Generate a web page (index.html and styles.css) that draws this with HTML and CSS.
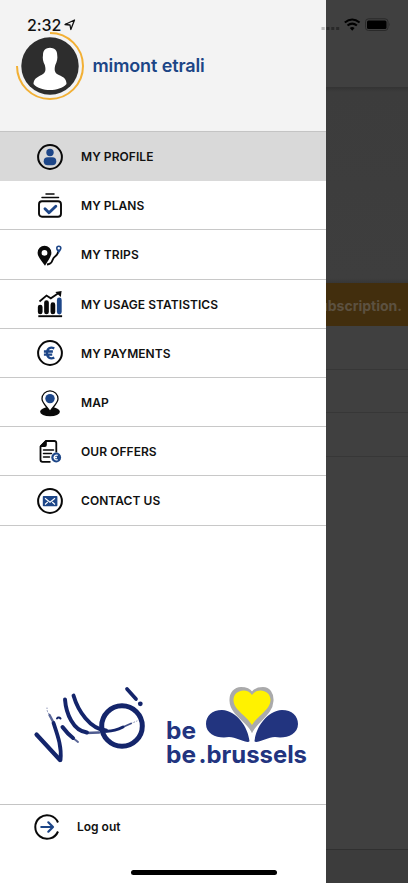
FILE: index.html
```html
<!DOCTYPE html>
<html lang="en">

<head>
    <meta charset="utf-8">
    <meta name="viewport" content="width=device-width, initial-scale=1">
    <title>Villo</title>
    <link rel="stylesheet" href="styles.css">
</head>

<body>
    <div class="screen">
        <!-- Side menu -->
        <nav class="drawer">
            <header class="profile">
                <svg class="avatar" width="70" height="70" viewBox="0 0 70 70">
                    <circle cx="35" cy="35" r="28.7" fill="#2d2d2d" />
                    <path d="M35 2A33 33 0 1 1 2 35" fill="none" stroke="#f2b035" stroke-width="2" />
                    <path d="M35 16.8C39 17 42.4 19 42.2 24C42.8 27 42 31 40.3 34C39.3 38 39.3 41 42 43C47 45.5 51.5 46.8 51.5 53C48 57 41 59 35 59S22 57 18.500 53C18.500 47 24 45.500 28 43C31 41 30.800 38 29.800 34C28 31 27.400 27 28 24C28 19 31 17 35 16.800Z" fill="#fff" />
                </svg>
                <span class="user-name">mimont etrali</span>
            </header>

            <ul class="menu">
                <li class="menu-item active">
                    <svg class="icon" viewBox="0 0 26 26">
                        <circle cx="13" cy="13" r="11.9" fill="none" stroke="#090909" stroke-width="2" />
                        <circle cx="13" cy="8.500" r="3.700" fill="#1d4688" />
                        <rect x="6.700" y="13.300" width="12.600" height="8" rx="4" fill="#1d4688" />
                    </svg>
                    <span>MY PROFILE</span>
                </li>
                <li class="menu-item">
                    <svg class="icon" viewBox="0 0 26 26">
                        <path d="M9 1h8M5 4.500h16.500" stroke="#090909" stroke-width="1.500" stroke-linecap="round" />
                        <rect x="2" y="8.200" width="22" height="15.500" rx="3" fill="none" stroke="#090909" stroke-width="1.900" />
                        <path d="M8 15.700l4 4 6.800-6.500" fill="none" stroke="#1d4688" stroke-width="2.900" stroke-linecap="round" stroke-linejoin="round" />
                    </svg>
                    <span>MY PLANS</span>
                </li>
                <li class="menu-item">
                    <svg class="icon" viewBox="0 0 26 26">
                        <path d="M10 22.500C17 22 14 17 18 14.500C20.500 12.500 21 11.500 21.200 9.500" fill="none" stroke="#090909" stroke-width="1.900" />
                        <path fill-rule="evenodd" d="M7.500 3.800A6.900 6.900 0 0 1 14.400 10.700C14.400 15 10.500 19 8 23.700C5 19 .6 15 .6 10.700A6.900 6.900 0 0 1 7.500 3.800ZM7.500 8A2.900 2.900 0 1 0 7.500 13.800A2.900 2.900 0 0 0 7.500 8Z" fill="#090909" />
                        <path fill-rule="evenodd" d="M21.800 3.500A2.800 2.800 0 0 1 24.600 6.300C24.600 8.200 22.500 9.500 21.700 12C21 9.500 19 8.500 19 6.300A2.800 2.800 0 0 1 21.800 3.500ZM21.800 5.100A1.200 1.200 0 1 0 21.800 7.500A1.200 1.200 0 0 0 21.800 5.100Z" fill="#1d4688" />
                    </svg>
                    <span>MY TRIPS</span>
                </li>
                <li class="menu-item">
                    <svg class="icon" viewBox="0 0 26 26">
                        <path d="M1.300 25.200h23.800" stroke="#090909" stroke-width="1.900" />
                        <path d="M3.200 16v5M9.500 11.500v9.500M15.900 13.700V21" stroke="#090909" stroke-width="4.700" stroke-linecap="round" />
                        <path d="M22.300 9v12" stroke="#1d4688" stroke-width="4.800" stroke-linecap="round" />
                        <path d="M2.500 10.500L9.500 4.500l4.300 2.800 7.500-5" fill="none" stroke="#090909" stroke-width="1.800" />
                        <path d="M18.300 1l6.300-1-.8 6z" fill="#090909" />
                    </svg>
                    <span>MY USAGE STATISTICS</span>
                </li>
                <li class="menu-item">
                    <svg class="icon" viewBox="0 0 26 26">
                        <circle cx="13" cy="13" r="11.900" fill="none" stroke="#090909" stroke-width="2" />
                        <path d="M17.300 8.400C13.300 6.700 10 8.300 10 13S13.300 19.300 17.300 17.600M6.900 11.500h9M6.900 14.700h8.300" fill="none" stroke="#1d4688" stroke-width="2.300" />
                    </svg>
                    <span>MY PAYMENTS</span>
                </li>
                <li class="menu-item">
                    <svg class="icon" viewBox="0 0 26 26">
                        <ellipse cx="13" cy="21.700" rx="9.900" ry="4.600" fill="#090909" />
                        <path d="M13 .8A8 8 0 0 1 21 8.800C21 13 16.200 16.500 13 21.500C9.800 16.500 5 13 5 8.800A8 8 0 0 1 13 .8Z" fill="#fff" stroke="#090909" stroke-width="1.300" />
                        <circle cx="13" cy="8.600" r="4.700" fill="#1d4688" />
                    </svg>
                    <span>MAP</span>
                </li>
                <li class="menu-item">
                    <svg class="icon" viewBox="0 0 26 26">
                        <path d="M19.300 13.500V4Q19.300 2 17.300 2H9L3.500 7.500V20.800Q3.500 22.800 5.500 22.800H13.500" fill="none" stroke="#090909" stroke-width="1.800" />
                        <path d="M3 8V6.800L8.300 1.500H9.800V6Q9.800 8 7.800 8Z" fill="#090909" />
                        <path d="M6.500 11h10M6.500 14.500h8M6.500 18h6" stroke="#090909" stroke-width="1.500" stroke-linecap="round" />
                        <circle cx="19.200" cy="18.500" r="4.900" fill="#1d4688" />
                        <path d="M20.700 16.400Q17.300 15.500 17.300 18.500T20.700 20.600M16.500 18.500h3.500" fill="none" stroke="#fff" stroke-width="1.300" />
                    </svg>
                    <span>OUR OFFERS</span>
                </li>
                <li class="menu-item">
                    <svg class="icon" viewBox="0 0 26 26">
                        <circle cx="13" cy="13" r="11.900" fill="none" stroke="#090909" stroke-width="2" />
                        <rect x="5.800" y="8" width="14.600" height="10.300" rx=".7" fill="#1d4688" />
                        <path d="M8 10.200l5 4 5-4M8 16.500l2.800-2.500M18 16.500l-2.800-2.500" fill="none" stroke="#fff" stroke-width="1.100" />
                    </svg>
                    <span>CONTACT US</span>
                </li>
            </ul>

            <!-- Partner logos -->
            <div class="logos">
                <svg class="villo" width="120" height="90" viewBox="30 680 120 90" fill="none" stroke="#14256b" stroke-linecap="round">
                    <circle cx="122" cy="726" r="20.300" stroke-width="5" />
                    <path d="M36.500 734.500L60 760" stroke-width="4.200" />
                    <path d="M60.500 760C62 747 57.500 735 53.500 723" stroke-width="3.800" />
                    <path d="M54 724C53 721 51 718 49.500 715" stroke-width="2.500" opacity=".7" />
                    <path d="M49 714C47.500 712 47 711 47 708" stroke-width="1" stroke-dasharray="1 2" opacity=".5" />
                    <path d="M62.500 727C65.500 731 69 735 73 738" stroke-width="4" />
                    <path d="M73 738L78 742" stroke-width="2" opacity=".7" />
                    <path d="M57 718.500C58 717 59.500 717.500 60.500 718.500" stroke-width="2" />
                    <path d="M65 699.500C66 713 73 731 87 732.500" stroke-width="3.900" />
                    <path d="M86 733L99 732.500" stroke-width="2.500" opacity=".75" />
                    <path d="M73.500 695.500C78 711 90 729 106 730.500" stroke-width="3.900" />
                    <path d="M104 731C112 732 118 729.500 123 727" stroke-width="3" />
                    <path d="M122 727.500L131 723.500" stroke-width="1.800" opacity=".8" />
                    <path d="M131 723.500L137 721" stroke-width="1" stroke-dasharray="1 2" opacity=".5" />
                    <path d="M127 689L136 699" stroke-width="3.700" />
                    <circle cx="140.300" cy="703.800" r="2.400" fill="#14256b" stroke="none" />
                </svg>
                <svg class="brussels" width="146" height="90" viewBox="163 680 146 90">
                    <path d="M252 731C247 721 231 714 230.500 701C230 693 235 688 241 688C246 688 250 690 252 693C254 690 258 688 263 688C269 688 273 693 272.500 701C272 714 257 721 252 731Z" fill="#aaaaab" stroke="#aaaaab" stroke-width="2" />
                    <path d="M252 725C246 715 233.500 710 233.500 700C233.500 690 247 687 252 695C257 687 270.500 690 270.500 700C270.500 710 258 715 252 725Z" fill="#fff200" />
                    <path d="M247.500 742C241 741 236 737.500 229 737C219 739 206 735 206 724C206 716 212 710 222 710C237 711 248 727 249.500 741Q249.500 742 247.500 742Z" fill="#22347f" />
                    <path d="M256.500 742C263 741 268 737.500 275 737C285 739 298 735 298 724C298 716 292 710 282 710C267 711 256 727 254.500 741Q254.500 742 256.500 742Z" fill="#22347f" />
                    <g class="brussels-text">
                        <text x="166" y="739.300" textLength="30" lengthAdjust="spacingAndGlyphs">be</text>
                        <text x="166" y="762.800" textLength="30" lengthAdjust="spacingAndGlyphs">be</text>
                        <text x="198.500" y="762.800" textLength="108.500" lengthAdjust="spacingAndGlyphs">.brussels</text>
                    </g>
                </svg>
            </div>

            <footer class="logout">
                <svg class="icon" viewBox="0 0 26 26">
                    <path d="M24 8.500A11.800 11.800 0 1 0 24 17.500" fill="none" stroke="#090909" stroke-width="2" />
                    <path d="M7.300 13h11M14.300 8.300l4.700 4.700-4.700 4.700" fill="none" stroke="#1d4688" stroke-width="2.200" stroke-linecap="round" stroke-linejoin="round" />
                </svg>
                <span>Log out</span>
            </footer>
        </nav>

        <!-- Dimmed page behind the menu -->
        <main class="page">
            <div class="page-header"></div>
            <div class="page-map"></div>
            <div class="banner"><span>subscription.</span></div>
            <div class="page-row"></div>
            <div class="page-row"></div>
            <div class="page-row"></div>
            <div class="page-rest"></div>
            <div class="page-footer"></div>
        </main>

        <!-- Phone status bar -->
        <div class="status-bar">
            <span class="time">2:32</span>
            <svg class="location" width="12" height="12" viewBox="0 0 12 12">
                <path d="M1 5.500L10.500 1 6.800 10.500 6 6Z" fill="none" stroke="#111" stroke-width="1.300" stroke-linejoin="round" />
            </svg>
            <svg class="signal" width="70" height="14" viewBox="0 0 70 14">
                <path d="M1.500 9h3.200v3H1.500z" fill="#bbb" />
                <path d="M6.400 9h3v3h-3zM11.300 9h3v3h-3zM16.200 9h3v3h-3z" fill="#292929" />
                <g fill="none" stroke="#000" stroke-width="2.100">
                    <path d="M24.800 4.500Q32.200-1.500 39.600 4.500M27.500 7.500Q32.200 3.600 36.900 7.500" />
                </g>
                <path d="M29.800 10Q32.200 8.100 34.600 10L32.200 12.800Z" />
                <rect x="45.500" y=".8" width="22.500" height="11.700" rx="3" fill="none" stroke="#292929" />
                <rect x="47" y="2.400" width="19.500" height="8.500" rx="1.500" />
                <path d="M69 4.700q1.200 1.700 0 3.600z" fill="#292929" />
            </svg>
        </div>
        <div class="home-bar"></div>
    </div>
</body>

</html>
```
FILE: styles.css
```css
body {
    margin: 0;
    background-color: #404040;
    font-family: Inter, "Liberation Sans", sans-serif;
    color: #111;
}

.screen {
    position: relative;
    display: flex;
    width: 408px;
    height: 883px;
    overflow: hidden;
}

.drawer {
    display: flex;
    flex-direction: column;
    width: 326px;
    background-color: #fff;
}

.profile {
    display: flex;
    align-items: center;
    gap: 7.5px;
    height: 131px;
    padding-left: 15px;
    box-sizing: border-box;
    background-color: #f3f3f3;
}

.user-name {
    color: #1b4586;
    font-size: 18px;
    font-weight: 600;
    letter-spacing: -0.12px;
}

.menu {
    list-style-type: none;
    margin: 0;
    padding: 0;
    border-top: 1px solid #c4c4c4;
}

.menu-item {
    display: flex;
    align-items: center;
    gap: 18px;
    height: 49.2px;
    padding: 1px 0 0 37px;
    box-sizing: border-box;
    border-bottom: 1px solid #c8c8c8;
    font-size: 12px;
    font-weight: 600;
    letter-spacing: 0.06px;
}

.menu-item.active {
    background-color: #d9d9d9;
    border-bottom-color: #d9d9d9;
}

.icon {
    width: 26px;
    height: 26px;
    flex: none;
    overflow: visible;
}

.logos {
    display: flex;
    flex: 1;
    align-items: flex-end;
    gap: 13px;
    padding: 0 0 34px 30px;
}

.brussels-text {
    fill: #22347f;
    font-size: 24px;
    font-weight: 700;
}

.logout {
    display: flex;
    gap: 17px;
    height: 79px;
    padding: 9px 0 0 34px;
    box-sizing: border-box;
    border-top: 1px solid #c4c4c4;
    font-size: 12px;
    font-weight: 600;
    line-height: 26px;
}

/* Page behind the menu */
.page {
    display: flex;
    flex-direction: column;
    flex: 1;
    overflow: hidden;
}

.page-header {
    height: 87px;
}

.page-map {
    height: 196px;
    background: linear-gradient(#333, #3c3c3c 5px, #3e3e3e 191px, #373737);
}

.banner {
    display: flex;
    align-items: center;
    justify-content: flex-end;
    height: 43px;
    padding: 2px 6px 0 0;
    box-sizing: border-box;
    background-color: #422e0d;
    color: #5c5140;
    font-size: 14px;
    font-weight: 700;
}

.page-row {
    height: 43.5px;
    box-sizing: border-box;
    border-bottom: 1px solid #373737;
}

.page-rest {
    flex: 1;
}

.page-footer {
    height: 34px;
    box-sizing: border-box;
    border-top: 1px solid #303030;
    background-color: #3c3c3c;
}

/* Overlays */
.status-bar {
    position: absolute;
    top: 15px;
    left: 27px;
    display: flex;
    width: 363px;
    height: 20px;
    align-items: center;
}

.time {
    font-size: 16px;
    font-weight: 500;
    letter-spacing: -0.1px;
}

.location {
    margin-left: 3px;
}

.signal {
    margin-left: auto;
}

.home-bar {
    position: absolute;
    bottom: 8px;
    left: 131px;
    width: 146px;
    height: 5px;
    border-radius: 3px;
    background-color: #000;
}
```
